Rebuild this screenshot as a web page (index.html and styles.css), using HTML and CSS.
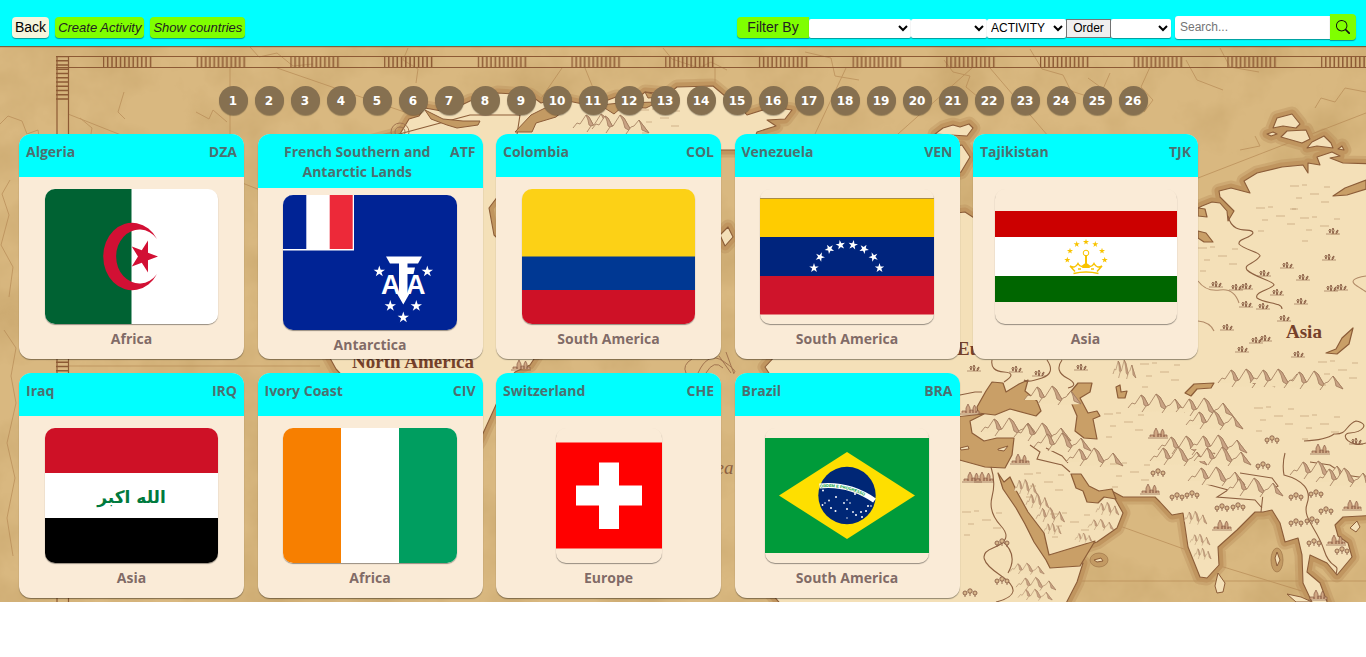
FILE: index.html
```html
<!DOCTYPE html>
<html lang="en">
<head>
<meta charset="utf-8">
<title>Countries</title>
<meta name="viewport" content="width=device-width, initial-scale=1">
<link rel="stylesheet" href="styles.css">
</head>
<body>
<header class="topbar">
  <nav class="actions" aria-label="Main">
    <button class="btn btn-back" type="button">Back</button>
    <button class="btn btn-action" type="button">Create Activity</button>
    <button class="btn btn-action" type="button">Show countries</button>
  </nav>
  <div class="tools">
    <div class="filters">
      <button class="filter-label" type="button">Filter By</button>
      <select class="pick pick-wide" aria-label="Continent"><option></option><option>Africa</option><option>Asia</option></select>
      <select class="pick pick-mid" aria-label="Season"><option></option><option>Summer</option></select>
      <select class="pick pick-activity" aria-label="Activity"><option>ACTIVITY</option></select>
      <button class="order" type="button">Order</button>
      <select class="pick pick-order" aria-label="Order by"><option></option><option>A-Z</option></select>
    </div>
    <form class="search">
      <input class="search-input" type="search" placeholder="Search..." aria-label="Search">
      <button class="search-btn" type="button" aria-label="Search">
        <svg class="search-icon" viewBox="0 0 16 16" aria-hidden="true"><path d="M11.742 10.344a6.5 6.5 0 1 0-1.397 1.398h-.001c.03.04.062.078.098.115l3.85 3.85a1 1 0 0 0 1.415-1.414l-3.85-3.85a1.007 1.007 0 0 0-.115-.1zM12 6.500a5.500 5.500 0 1 1-11 0 5.500 5.500 0 0 1 11 0z"/></svg>
      </button>
    </form>
  </div>
</header>

<main class="world">
  <svg class="map" viewBox="0 46 1366 556" preserveAspectRatio="xMinYMin slice" aria-hidden="true">
    <defs>
      <filter id="paper" x="0" y="0" width="100%" height="100%">
        <feTurbulence type="fractalNoise" baseFrequency="0.014" numOctaves="5" seed="8"/>
        <feColorMatrix values="0 0 0 0 .52  0 0 0 0 .33  0 0 0 0 .12  1.100 0 0 0 -.43"/>
      </filter>
      <pattern id="ticksH" x="103" y="56" width="93.700" height="12" patternUnits="userSpaceOnUse">
        <path d="M.5 0v12M4.700 0v12M9 0v12M13.200 0v12M17.500 0v12M21.700 0v12M26 0v12M30.200 0v12M34.500 0v12M38.700 0v12M43 0v12M47.500 0v12" stroke="#8d5a34" stroke-width="1.500"/>
      </pattern>
      <pattern id="ticksV" x="56" y="56" width="13" height="92" patternUnits="userSpaceOnUse">
        <path d="M0 .5h13M0 4.700h13M0 9h13M0 13.200h13M0 17.500h13M0 21.700h13M0 26h13M0 30.200h13M0 34.500h13M0 38.700h13M0 43h13" stroke="#8d5a34" stroke-width="1.500"/>
      </pattern>
      <g id="peaks" fill="#e5cb9f" stroke="#a07a5c" stroke-width=".8" stroke-linejoin="round">
        <path d="M0 16l4-5 3 1 6-9 3 2 6 11" fill="#f3dfb6"/><path d="M13 3l3 2 6 11-6-3-1-5z" fill="#c9a384"/>
        <path d="M14 20l4-6 3-1 7-11 4 3 8 14" fill="#f3dfb6"/><path d="M28 2l4 3 8 14-7-4-2-7z" fill="#c9a384"/>
        <path d="M34 21l5-7 3-1 5-6 10 13" fill="#f3dfb6"/><path d="M47 7l10 13-7-3-1-5z" fill="#c9a384"/>
      </g>
      <g id="reeds" fill="none" stroke="#8a5f45" stroke-width="1"><path d="M-1 6h14" stroke-width=".6"/><path d="M3 5q-2-3 0-4 1 1 0 4M6 6q-2-5 0-6 2 2 0 6M9 6q0-4 2-4 0 3-2 4"/></g>
      <g id="grove" fill="#d8b78a" stroke="#8a6048" stroke-width=".9"><circle cx="3" cy="5" r="2"/><circle cx="8" cy="3" r="2.200"/><circle cx="13" cy="5" r="2"/><path d="M3 7v2M8 5v3M13 7v2"/></g>
      <g id="town" fill="#cfa682" stroke="#8a5c46" stroke-width=".7"><path d="M0 12h20M2 11V9h4v2M6 11V6l2-4 2 4v5M10 11V8h3v3M13 11V6l1.500-3L16 6v5M16 11V9h3v2"/></g>
      <g id="marsh" fill="none" stroke="#b8946c" stroke-width=".6"><path d="M0 2h9M12 1h5M6 14h6M20 10h9M34 3h6M31 18h8M2 25h6"/></g>
      <path id="landNorth" d="M400 134L409 119 419 116 425 108 447 112 470 101 483 98 497 93 530 95 541 103 548 101 568 101 583 104 600 103 616 97 638 98 645 92 668 94 677 87 713 86 725 96 727 102 737 104 747 115 772 107 792 110 785 119 767 120 776 126 757 132 750 150H410z"/>
      <path id="landAsia" d="M1185 215L1202 206 1212 202 1220 203 1227 211 1228 221 1234 211 1220 197 1219 191 1231 188 1250 193 1244 181 1257 173 1282 167 1303 165 1308 173 1308 163 1320 165 1317 157 1332 152 1340 156 1330 158 1343 163 1380 164V515L1343 517 1335 525 1338 536 1348 543 1352 557 1337 575 1327 563 1310 555 1307 572 1320 583 1332 615H1318L1303 583 1302 555 1298 538 1285 542 1280 523 1272 510 1263 512 1255 512 1237 530 1218 547 1219 565 1207 578 1200 577 1188 547 1183 513 1172 515 1160 502 1155 497 1123 497 1110 490 1123 513 1117 528 1097 542 1070 551 1050 563 1083 563 1077 582 1060 615H790L760 580 780 390 765 367 790 340 900 250 940 215 965 212 985 225 1080 240z"/>
      <path id="landAmerica" d="M470 115H520L510 180 489 208 494 235 520 260 540 350 530 365 515 372 505 385 480 440 460 470 400 400 350 384 336 369 320 340 340 150z"/>
      <path id="islands" d="M1273 128L1277 118 1292 114 1300 124 1296 128 1283 126zM1267 134l6-2 4 2-6 2zM1281 137l6-6 19-1 4 9-8 4zM1307 148l5-6 12-6 7 7 2 5-16-2zM1338 149l4-3 2 4zM935 134l8-6 10-3 7 2 9-3 4 4-6 8zM940 150l22-5 8 12-9 15-20 2zM720 235l8-8 5 10-8 9z"/>
      <g id="seas">
        <path d="M977 407L986 391 992 382 1003 383 1006 392 1019 384 1028 380 1025 391 1037 401 1041 411 1036 416 1010 409 995 415 978 413z"/>
        <path d="M1068 395L1078 383 1092 383 1090 392 1080 398 1088 413 1097 411 1100 416 1093 419 1097 439 1084 438 1075 431 1077 416z"/>
        <path d="M945 418L984 414 970 421 972 433 984 441 997 438 1014 438 1012 455 1005 468 985 467 945 456z"/>
        <path d="M998 473L1004 482 1010 477 1017 492 1028 512 1044 533 1049 555 1095 541 1080 566 1050 568 1046 560 1034 542 1025 524 1016 508 1003 489z"/>
        <path d="M1071 474L1081 474 1089 486 1099 491 1112 489 1116 499 1104 497 1098 503 1087 502 1083 491 1076 488z"/>
        <path d="M1116 387l4-2 1 7 6-1-2 7h-7zM1185 393l9-9 20-1-3 5-14 1-6 7zM1333 196l12-8 21-8v9l-19 6zM1198 216l9 1-2-8-7-1zM1198 231l8 2 7 9-9 0-6-4zM1326 353l10-4 6-11 11-10-4 16-12 10z"/>
      </g>
    </defs>
    <rect y="46" width="1366" height="556" fill="#d9b880"/>
    <rect y="46" width="1366" height="556" filter="url(#paper)"/>
    <g fill="none" stroke="#b1834f" stroke-width="1" opacity=".6">
      <path d="M68 114L260 190M230 68V134M277 68L500 145M562 68L540 100M585 68L602 110M846 68L815 134M972 68L880 150M990 68L1060 150M1198 178L1366 113M69 366H320M959 581H1366M1117 525L1195 553M1217 565L1305 592M715 68V86"/>
      <path d="M0 124l8-8 14 5 5 13 11-4 2 13 18 3M80 118l12 10-3 17 11 2 9-8M124 92l-6 20 7 7M196 112l13 7 4-9 14 12M250 47l9 10 18-4 16 13 20-2M408 48l-5 12 15 9-2 14M663 48l9 11 27 9 12-6 16 8M805 52l26 6 4 18 24 4M944 60l9 12 17 4-4 11 18 15 13-4M1030 49l12 20 21 6 8 16 22 7M1088 78l15 11 7-16M1150 67l-9 20 12 13-9 12M1186 60l11 20 26 10M1220 48l10 19 29 5M1315 108l6-10 14 4 10-14 21 4M1240 150l20-4-5-10M10 180l-8 14 7 21-8 30 12 22-4 30M4 330l12 18-5 28 5 27-9 40 8 35-8 40 6 38"/>
    </g>
    <g fill="none" stroke="#8d5a34" stroke-width="1.200">
      <path d="M56 56.500H1366M56 67.500H1366M57 56V602M68.500 56V602"/>
    </g>
    <rect x="103" y="56" width="1263" height="12" fill="url(#ticksH)"/>
    <rect x="56" y="56" width="13" height="546" fill="url(#ticksV)"/>

    <g stroke-linejoin="round">
      <g fill="none" stroke="#b28653" stroke-width="15" opacity=".3"><use href="#landNorth"/><use href="#landAsia"/><use href="#landAmerica"/><use href="#islands"/></g>
      <g fill="none" stroke="#c0955f" stroke-width="9"><use href="#landNorth"/><use href="#landAsia"/><use href="#landAmerica"/><use href="#islands"/></g>
      <g fill="#f4e0b8" stroke="#8c5d38" stroke-width="1.100"><use href="#landNorth"/><use href="#landAsia"/><use href="#landAmerica"/><use href="#islands"/></g>
      <g fill="#c99f67" stroke="#8c5d38" stroke-width="1.200"><use href="#seas"/></g>
      <g fill="#c39a63" stroke="#8c5d38"><path d="M425 110l18 9 20 2 17 0-2 4-21 3-10-3-16-6zM515 132l16-17 16-8 6-14 5 18 12-6-14 12-20 6-4 9zM600 105l20-2 38-1-12 6-24-1-8 7zM645 92l12 3 17-3v4l-26 2z"/></g>
      <g fill="#c39a63" stroke="#a57b4c" stroke-width=".8"><ellipse cx="1099" cy="560" rx="9" ry="7"/><ellipse cx="1277" cy="560" rx="6" ry="12"/></g>
      <g fill="#f4e0b8" stroke="#8c5d38"><path d="M1094 560l7-2 2 3-6 1zM1275 558l2-6 3 8-3 6zM1215 586l3-13 7 10-2 9-6 1zM1350 528l7-7 3 6-4 5zM960 448l8-2 1 3-8 1zM998 449l10-3-4 5-6-1zM1287 594l14 3 11 5h-16z"/></g>
    </g>

    <g fill="none" stroke="#8d6040" stroke-width="1.100">
      <path d="M1228 216C1233 237 1253 226 1253 233C1250 239 1238 238 1239 244C1244 250 1261 252 1260 256C1255 264 1243 264 1247 270C1254 277 1274 281 1274 285C1270 290 1254 292 1257 298C1265 304 1282 302 1282 309"/>
      <path d="M1198 281Q1206 292 1220 290T1239 303M1198 321Q1210 322 1214 331M1366 276Q1346 279 1357 286T1366 292" stroke="#b28b68"/>
      <path d="M992 360Q990 371 1004 372T1004 382M1047 360Q1056 373 1042 378T1024 380M1062 360Q1054 371 1067 378T1068 388M960 395L975 392 982 392M991 467Q996 482 992 497T1001 526 993 548 1000 575 996 602M1001 540Q1019 554 1008 573"/>
      <path d="M1030 445L1040 452 1037 459 1062 465 1070 472M1046 448L1062 456 1068 463M1261 512L1263 494 1278 486 1272 478 1240 473M1262 508L1255 500 1217 497 1228 490 1206 484M1285 453Q1282 464 1284 475C1303 480 1312 490 1307 504S1317 528 1324 550 1340 561 1336 574M1304 441Q1326 440 1334 434C1348 435 1345 425 1356 421C1371 424 1362 432 1350 433S1351 449 1366 443M1310 462L1330 465 1345 475 1366 478"/>
    </g>
    <g>
      <use href="#peaks" x="1218" y="367"/><use href="#peaks" x="1250" y="367"/><use href="#peaks" x="1286" y="369"/>
      <use href="#peaks" x="1128" y="392"/><use href="#peaks" x="1176" y="396"/><use href="#peaks" x="1186" y="409"/>
      <use href="#peaks" x="981" y="416"/><use href="#peaks" x="1014" y="421"/><use href="#peaks" x="1034" y="431"/><use href="#peaks" x="1066" y="446"/>
      <use href="#peaks" x="1158" y="434"/><use href="#peaks" x="1190" y="433"/><use href="#peaks" x="1150" y="445"/><use href="#peaks" x="1194" y="445"/>
      <use href="#peaks" x="1188" y="465"/><use href="#peaks" x="1226" y="476"/><use href="#peaks" x="1290" y="459"/><use href="#peaks" x="1316" y="466"/>
      <use href="#peaks" x="1024" y="384"/><use href="#peaks" x="573" y="112"/><use href="#peaks" x="592" y="113"/>
      <use href="#peaks" transform="translate(1014 478) scale(.4 .8)"/><use href="#peaks" transform="translate(1026 492) scale(.4 .8)"/><use href="#peaks" transform="translate(1036 506) scale(.5 .8)"/><use href="#peaks" transform="translate(1044 522) scale(.3 .6)"/>
      <use href="#peaks" transform="translate(1096 501) scale(.4 .7)"/><use href="#peaks" transform="translate(1088 518) scale(.45 .6)"/><use href="#peaks" transform="translate(1075 532) scale(.3 .5)"/>
      <use href="#peaks" transform="translate(1184 510) scale(.4 .7)"/><use href="#peaks" transform="translate(1190 533) scale(.35 .6)"/><use href="#peaks" transform="translate(1194 547) scale(.3 .6)"/>
      <use href="#peaks" transform="translate(1010 562) scale(.6)"/><use href="#peaks" transform="translate(1016 576) scale(.7)"/><use href="#peaks" transform="translate(1018 588) scale(.6)"/>
      <use href="#peaks" transform="translate(1113 358) scale(.4 1)"/>
    </g>
    <g>
      <use href="#town" x="1140" y="482"/><use href="#town" x="962" y="470"/><use href="#town" x="974" y="470"/><use href="#town" x="1148" y="426"/><use href="#town" x="1310" y="442"/><use href="#town" x="1212" y="518"/><use href="#town" x="1342" y="498"/><use href="#town" x="1326" y="533"/><use href="#town" x="1010" y="452"/><use href="#town" x="1308" y="588"/><use href="#town" x="960" y="402"/><use href="#town" x="511" y="358"/>
      <use href="#grove" x="1169" y="492"/><use href="#grove" x="1184" y="490"/><use href="#grove" x="1150" y="468"/><use href="#grove" x="1255" y="461"/><use href="#grove" x="1288" y="492"/><use href="#grove" x="1308" y="489"/><use href="#grove" x="1288" y="518"/><use href="#grove" x="1304" y="516"/><use href="#grove" x="1318" y="506"/><use href="#grove" x="1306" y="538"/><use href="#grove" x="1334" y="546"/><use href="#grove" x="1214" y="503"/><use href="#grove" x="1230" y="502"/><use href="#grove" x="1264" y="435"/><use href="#grove" x="994" y="538"/><use href="#grove" x="994" y="576"/><use href="#grove" x="962" y="588"/>
      <use href="#reeds" x="1210" y="281"/><use href="#reeds" x="1230" y="284"/><use href="#reeds" x="1240" y="283"/><use href="#reeds" x="1258" y="270"/><use href="#reeds" x="1271" y="289"/><use href="#reeds" x="1297" y="274"/><use href="#reeds" x="1323" y="254"/><use href="#reeds" x="1327" y="228"/><use href="#reeds" x="1325" y="285"/><use href="#reeds" x="1335" y="284"/><use href="#reeds" x="1295" y="298"/><use href="#reeds" x="1240" y="301"/><use href="#reeds" x="1257" y="303"/><use href="#reeds" x="1278" y="315"/><use href="#reeds" x="1221" y="324"/><use href="#reeds" x="1250" y="337"/><use href="#reeds" x="1259" y="335"/><use href="#reeds" x="1236" y="346"/><use href="#reeds" x="1292" y="351"/><use href="#reeds" x="1281" y="262"/><use href="#reeds" x="968" y="365"/><use href="#reeds" x="1010" y="366"/><use href="#reeds" x="1033" y="370"/><use href="#reeds" x="1075" y="364"/><use href="#reeds" x="1350" y="438"/>
      <use href="#marsh" x="1290" y="184"/><use href="#marsh" x="1300" y="216"/><use href="#marsh" x="1256" y="206"/><use href="#marsh" x="1198" y="246"/><use href="#marsh" x="1318" y="360"/><use href="#marsh" x="1140" y="362"/><use href="#marsh" x="1104" y="412"/><use href="#marsh" x="1254" y="406"/><use href="#marsh" x="1300" y="414"/><use href="#marsh" x="1024" y="472"/><use href="#marsh" x="1110" y="462"/><use href="#marsh" x="962" y="510"/><use href="#marsh" x="1050" y="512"/><use href="#marsh" x="640" y="108"/>
    </g>
    <g class="map-label">
      <text x="1286" y="338">Asia</text><text x="957" y="355">Europe</text><text x="352" y="368" class="map-label-small">North America</text><text x="706" y="474" class="map-label-sea">Sea</text>
    </g>
    <g fill="none" stroke="#a27550" stroke-width="1"><path d="M698 373q10-22 25-12t11 12M706 373q8-14 17-5M719 356l12 17M726 352l8 22M686 373q-4-8 6-14"/><circle cx="400" cy="132" r="9"/><circle cx="400" cy="132" r="5"/></g>
  </svg>

  <div class="content">
    <nav class="pages" aria-label="Pages">
      <button class="page" type="button">1</button><button class="page" type="button">2</button><button class="page" type="button">3</button><button class="page" type="button">4</button><button class="page" type="button">5</button><button class="page" type="button">6</button><button class="page" type="button">7</button><button class="page" type="button">8</button><button class="page" type="button">9</button><button class="page" type="button">10</button><button class="page" type="button">11</button><button class="page" type="button">12</button><button class="page" type="button">13</button><button class="page" type="button">14</button><button class="page" type="button">15</button><button class="page" type="button">16</button><button class="page" type="button">17</button><button class="page" type="button">18</button><button class="page" type="button">19</button><button class="page" type="button">20</button><button class="page" type="button">21</button><button class="page" type="button">22</button><button class="page" type="button">23</button><button class="page" type="button">24</button><button class="page" type="button">25</button><button class="page" type="button">26</button>
    </nav>

    <section class="cards" aria-label="Countries">
      <article class="card">
        <div class="card-head"><span class="name">Algeria</span><span class="code">DZA</span></div>
        <div class="card-body">
          <svg class="flag" viewBox="0 0 173 135" role="img" aria-label="Flag of Algeria">
            <defs><path id="star" d="M0-10L2.250-3.090H9.510L3.630 1.180 5.880 8.090 0 3.820-5.880 8.090-3.630 1.180-9.510-3.090H-2.250z"/></defs>
            <rect width="173" height="135" fill="#fff"/><rect width="86.500" height="135" fill="#006233"/>
            <path d="M112 50A29 33.700 0 1 0 112 85A23.200 27 0 1 1 112 50z" fill="#d21034"/>
            <use href="#star" fill="#d21034" transform="translate(98.500 67.500) scale(1.450 1.690) rotate(90)"/>
          </svg>
          <span class="region">Africa</span>
        </div>
      </article>
      <article class="card">
        <div class="card-head"><span class="name">French Southern and Antarctic Lands</span><span class="code">ATF</span></div>
        <div class="card-body">
          <svg class="flag" viewBox="0 0 174 135" role="img" aria-label="Flag of the French Southern and Antarctic Lands">
            <rect width="174" height="135" fill="#002395"/><rect width="71" height="55.500" fill="#fff"/><rect width="23.300" height="54" fill="#002395"/><rect x="46.700" width="23" height="54" fill="#ed2939"/>
            <g fill="#fff">
              <path d="M103 61.500H139L135 68.500H107z"/><path d="M116 66H124.500V98L128 96 120.300 109.500 112.500 96 116 98z"/><path d="M124 72.500H132L130.500 79H124z"/>
              <text class="emblem" x="98" y="98.500">A</text><text class="emblem" x="123" y="98.500">A</text>
              <use href="#star" transform="translate(96.300 76.500) scale(.6)"/><use href="#star" transform="translate(144.300 76.500) scale(.6)"/><use href="#star" transform="translate(107.300 111) scale(.6)"/><use href="#star" transform="translate(133.300 111) scale(.6)"/><use href="#star" transform="translate(120.300 122.500) scale(.6)"/>
            </g>
          </svg>
          <span class="region">Antarctica</span>
        </div>
      </article>
      <article class="card">
        <div class="card-head"><span class="name">Colombia</span><span class="code">COL</span></div>
        <div class="card-body">
          <svg class="flag" viewBox="0 0 173 135" role="img" aria-label="Flag of Colombia">
            <rect y="101" width="173" height="34" fill="#ce1126"/><rect y="67" width="173" height="34" fill="#003893"/><rect width="173" height="67.500" fill="#fcd116"/>
          </svg>
          <span class="region">South America</span>
        </div>
      </article>
      <article class="card">
        <div class="card-head"><span class="name">Venezuela</span><span class="code">VEN</span></div>
        <div class="card-body">
          <svg class="flag" viewBox="0 0 174 135" role="img" aria-label="Flag of Venezuela">
            <rect y="9" width="174" height="39" fill="#fc0"/><rect y="9" width="174" height="1" fill="#a98c45"/><rect y="48" width="174" height="39" fill="#00247d"/><rect y="87" width="174" height="38.500" fill="#cf142b"/>
            <g fill="#fff">
              <use href="#star" transform="translate(54 79) rotate(-72) scale(.5)"/><use href="#star" transform="translate(60 68) rotate(-50) scale(.5)"/><use href="#star" transform="translate(69.500 60) rotate(-30) scale(.5)"/><use href="#star" transform="translate(80.500 56) rotate(-10) scale(.5)"/><use href="#star" transform="translate(93 56) rotate(10) scale(.5)"/><use href="#star" transform="translate(104 60) rotate(30) scale(.5)"/><use href="#star" transform="translate(113.500 68) rotate(50) scale(.5)"/><use href="#star" transform="translate(119.500 79) rotate(72) scale(.5)"/>
            </g>
          </svg>
          <span class="region">South America</span>
        </div>
      </article>
      <article class="card">
        <div class="card-head"><span class="name">Tajikistan</span><span class="code">TJK</span></div>
        <div class="card-body">
          <svg class="flag" viewBox="0 0 182 135" role="img" aria-label="Flag of Tajikistan">
            <rect y="22" width="182" height="26" fill="#c00"/><rect y="48" width="182" height="39" fill="#fff"/><rect y="87" width="182" height="26" fill="#060"/>
            <g fill="#f8c300">
              <use href="#star" transform="translate(72.300 71) scale(.32)"/><use href="#star" transform="translate(75 62) scale(.32)"/><use href="#star" transform="translate(81.700 55.300) scale(.32)"/><use href="#star" transform="translate(91 53) scale(.32)"/><use href="#star" transform="translate(100.300 55.300) scale(.32)"/><use href="#star" transform="translate(107 62) scale(.32)"/><use href="#star" transform="translate(109.700 71) scale(.32)"/>
              <path d="M90 66h2v9q3 2 3 4H87q0-2 3-4z"/>
            </g>
            <path d="M78.500 84.500Q91 81.500 103.500 84.500M80 82.500L75 77Q80 80 83 74.500 86 80 90 75M102 82.500L107 77Q102 80 99 74.500 96 80 92 75M83 80h3M96 80h3" fill="none" stroke="#f8c300" stroke-width="1.500"/><circle cx="91" cy="64" r="2.800" fill="none" stroke="#f8c300"/>
          </svg>
          <span class="region">Asia</span>
        </div>
      </article>
      <article class="card">
        <div class="card-head"><span class="name">Iraq</span><span class="code">IRQ</span></div>
        <div class="card-body">
          <svg class="flag" viewBox="0 0 173 135" role="img" aria-label="Flag of Iraq">
            <rect y="90" width="173" height="45"/><rect y="45" width="173" height="45" fill="#fff"/><rect width="173" height="45" fill="#ce1126"/>
            <text class="takbir" x="86.500" y="75" text-anchor="middle">الله اكبر</text>
          </svg>
          <span class="region">Asia</span>
        </div>
      </article>
      <article class="card">
        <div class="card-head"><span class="name">Ivory Coast</span><span class="code">CIV</span></div>
        <div class="card-body">
          <svg class="flag" viewBox="0 0 174 135" role="img" aria-label="Flag of Ivory Coast">
            <rect width="174" height="135" fill="#fff"/><rect width="58" height="135" fill="#f77f00"/><rect x="116" width="58" height="135" fill="#009e60"/>
          </svg>
          <span class="region">Africa</span>
        </div>
      </article>
      <article class="card">
        <div class="card-head"><span class="name">Switzerland</span><span class="code">CHE</span></div>
        <div class="card-body">
          <svg class="flag" viewBox="0 0 106 135" role="img" aria-label="Flag of Switzerland">
            <rect y="14.500" width="106" height="106" fill="#f00"/><path d="M43 34.500H63V57.500H86V77.500H63V101H43V77.500H20V57.500H43z" fill="#fff"/>
          </svg>
          <span class="region">Europe</span>
        </div>
      </article>
      <article class="card">
        <div class="card-head"><span class="name">Brazil</span><span class="code">BRA</span></div>
        <div class="card-body">
          <svg class="flag" viewBox="0 0 164 135" role="img" aria-label="Flag of Brazil">
            <rect y="10" width="164" height="115" fill="#009b3a"/><path d="M14 67.500L82 24 150 67.500 82 111z" fill="#fedf00"/><circle cx="82" cy="67.500" r="28.700" fill="#002776"/>
            <path d="M54.500 58Q84 55 109.500 72.500" fill="none" stroke="#fff" stroke-width="5"/>
            <path id="motto" d="M55 59.500Q84 56.500 109 74" fill="none"/><text class="motto"><textPath href="#motto">ORDEM E PROGRESSO</textPath></text>
            <g fill="#fff"><circle cx="58" cy="62.500" r="1"/><circle cx="71" cy="69" r="1"/><circle cx="64" cy="72.500" r=".9"/><circle cx="60" cy="75" r=".8"/><circle cx="57.500" cy="77" r=".9"/><circle cx="66" cy="80" r="1"/><circle cx="70.500" cy="83" r="1"/><circle cx="79" cy="75" r=".9"/><circle cx="82" cy="72" r=".8"/><circle cx="85" cy="75" r=".8"/><circle cx="82" cy="81" r="1"/><circle cx="90" cy="66" r="1"/><circle cx="88" cy="84" r=".9"/><circle cx="91" cy="87" r="1"/><circle cx="96" cy="84" r="1"/><circle cx="97" cy="89" r="1"/><circle cx="101" cy="83" r="1"/><circle cx="103" cy="78" r="1"/><circle cx="106" cy="78" r=".8"/><circle cx="82" cy="90" r=".7"/></g>
          </svg>
          <span class="region">South America</span>
        </div>
      </article>
    </section>
  </div>
</main>
</body>
</html>
```
FILE: styles.css
```css
* { box-sizing: border-box; }

body {
  margin: 0;
  background: #fff;
  font-family: "Liberation Sans", Arial, sans-serif;
}

button, select, input { font-family: inherit; margin: 0; }

.topbar {
  position: relative;
  z-index: 1;
  display: flex;
  align-items: center;
  justify-content: space-between;
  padding: 14px 10px 6px 12px;
  background: #0ff;
  box-shadow: 0 1px 1px rgba(60, 40, 20, .6);
}

.actions, .tools, .filters, .search { display: flex; }
.actions { gap: 6px; }
.tools { align-items: center; gap: 4px; }
.filters { align-items: flex-end; }
.search { align-items: center; }

.btn {
  height: 21px;
  padding: 0 3px;
  border: 0;
  border-radius: 4px;
  color: #222;
  box-shadow: 0 1px 1px rgba(0, 0, 0, .4);
}
.btn-back { background: beige; font-size: 14px; color: #000; }
.btn-action { background: #7fff00; font-size: 13px; font-style: italic; }

.filter-label {
  height: 21px;
  width: 72px;
  padding: 0;
  border: 0;
  border-radius: 4px 0 0 4px;
  background: #7fff00;
  font-size: 14px;
  color: #222;
  box-shadow: 0 1px 1px rgba(0, 0, 0, .4);
}

.pick {
  height: 19px;
  padding: 0;
  border: 0;
  border-radius: 2px;
  background: #fff;
  font-size: 12px;
  color: #000;
  box-shadow: 0 1px 1px rgba(0, 0, 0, .4);
}
.pick-wide { width: 102px; }
.pick-mid { width: 76px; }
.pick-activity { width: 79px; }
.pick-order { width: 60px; }

.order {
  height: 19px;
  width: 45px;
  padding: 0;
  border: 1px solid #767676;
  background: #efefef;
  font-size: 12px;
  color: #000;
}

.search-input {
  width: 155px;
  height: 23px;
  padding: 0 5px;
  border: 0;
  border-radius: 3px 0 0 3px;
  background: #fff;
  font-size: 12px;
  box-shadow: 0 1px 1px rgba(0, 0, 0, .4);
}
.search-btn {
  display: flex;
  align-items: center;
  justify-content: center;
  width: 26px;
  height: 26px;
  padding: 0;
  border: 0;
  border-radius: 0 4px 4px 0;
  background: #7fff00;
  box-shadow: 0 1px 1px rgba(0, 0, 0, .4);
}
.search-icon { width: 14px; height: 14px; fill: #111; }

.world {
  position: relative;
  overflow: hidden;
  background: #d9b880;
}
.map { position: absolute; inset: 0; width: 100%; height: 100%; }
.map-label { font: bold 19px "Liberation Serif", serif; fill: #75402a; }
.map-label-small { font-size: 19px; }
.map-label-sea { font-style: italic; font-weight: normal; fill: #8d6040; }

.content { position: relative; padding: 40px 0 4px; }

.pages {
  display: flex;
  flex-wrap: wrap;
  justify-content: center;
  gap: 7px;
}
.page {
  width: 29px;
  height: 29px;
  padding: 0;
  border: 0;
  border-radius: 50%;
  background: #867050;
  color: #fff;
  font: bold 12px "DejaVu Sans", Verdana, sans-serif;
  box-shadow: 0 1px 1px rgba(0, 0, 0, .3);
}

.cards {
  display: grid;
  grid-template-columns: repeat(auto-fill, 225px);
  justify-content: space-between;
  gap: 14px 13px;
  margin: 19px 168px 0 19px;
}
.card {
  display: flex;
  flex-direction: column;
  height: 225px;
  overflow: hidden;
  border-radius: 12px;
  background: #faebd7;
  color: rgba(96, 72, 72, .8);
  font: bold 14px/20px "Open Sans", "Segoe UI", sans-serif;
  text-align: center;
  box-shadow: 0 1px 1px rgba(0, 0, 0, .4);
}
.card-head {
  display: flex;
  justify-content: space-between;
  min-height: 43px;
  padding: 8px 7px 6px;
  background: #0ff;
}
.card-body {
  display: flex;
  flex: 1;
  flex-direction: column;
  align-items: center;
  justify-content: center;
  gap: 5px;
  padding-top: 2px;
}
.flag {
  height: 135px;
  border-radius: 10px;
  box-shadow: 0 1px 1px rgba(0, 0, 0, .4);
}
.emblem { font: bold 27px "Liberation Sans", sans-serif; }
.takbir { font: bold 17px "DejaVu Sans", sans-serif; fill: #007a3d; }
.motto { font: bold 4px "Liberation Sans", sans-serif; fill: #009b3a; }
```
